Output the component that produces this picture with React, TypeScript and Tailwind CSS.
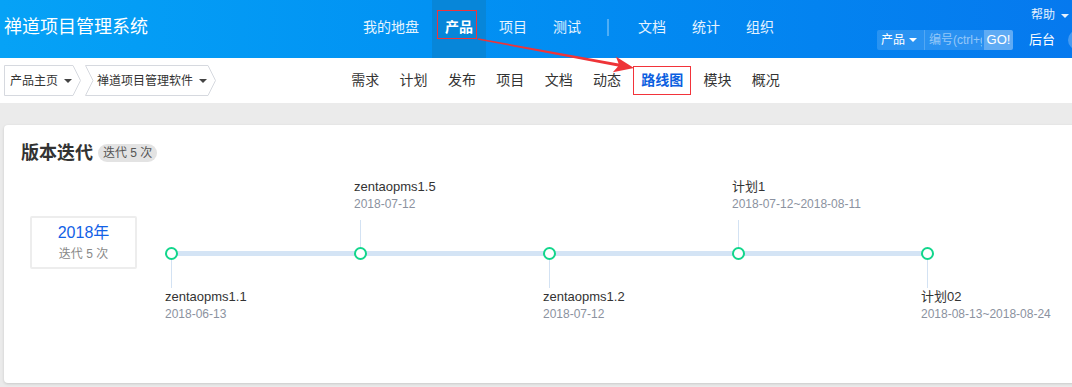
import React from "react";

type Node = { name: string; date: string; up: boolean };

const nodes: Node[] = [
  { name: "zentaopms1.1", date: "2018-06-13", up: false },
  { name: "zentaopms1.5", date: "2018-07-12", up: true },
  { name: "zentaopms1.2", date: "2018-07-12", up: false },
  { name: "计划1", date: "2018-07-12~2018-08-11", up: true },
  { name: "计划02", date: "2018-08-13~2018-08-24", up: false },
];

const mainNav = ["我的地盘", "产品", "项目", "测试", "|", "文档", "统计", "组织"];
const subNav = ["需求", "计划", "发布", "项目", "文档", "动态", "路线图", "模块", "概况"];

function Caret({ className = "" }: { className?: string }) {
  return (
    <span
      className={`inline-block h-0 w-0 border-x-[4px] border-t-[4px] border-x-transparent border-t-current ${className}`}
    />
  );
}

function Crumb({ label, width, first }: { label: string; width: number; first?: boolean }) {
  const h = 31;
  const pts = first
    ? `0.5,0.5 ${width - 8},0.5 ${width - 0.5},${h / 2} ${width - 8},${h - 0.5} 0.5,${h - 0.5}`
    : `0.5,0.5 ${width - 8},0.5 ${width - 0.5},${h / 2} ${width - 8},${h - 0.5} 0.5,${h - 0.5} 8,${h / 2}`;
  return (
    <div className="relative flex h-[31px] items-center" style={{ width }}>
      <svg className="absolute inset-0" width={width} height={h}>
        <polygon points={pts} fill="white" stroke="#d6d9df" strokeWidth="1" />
      </svg>
      <span className={`relative flex items-center text-[12px] text-[#333] ${first ? "pl-[6px]" : "pl-[12px]"}`}>
        {label}
        <Caret className="ml-[6px] text-[#444]" />
      </span>
    </div>
  );
}

function TimelineNode({ n, last }: { n: Node; last?: boolean }) {
  const label = (
    <div className="whitespace-nowrap">
      <div className="text-[13px] leading-[18px] text-[#333]">{n.name}</div>
      <div className="text-[12px] leading-[17px] text-[#8b92a0]">{n.date}</div>
    </div>
  );
  return (
    <div className={`flex flex-col ${last ? "w-[120px]" : "w-[189px]"}`}>
      <div className="flex h-[69px] flex-col justify-end">
        {n.up && (
          <>
            {label}
            <div className="mt-[7px] ml-[6px] h-[27px] w-px bg-[#d3e2f3]" />
          </>
        )}
      </div>
      <div className="relative z-10 h-[13px] w-[13px] rounded-full border-2 border-[#12d68c] bg-white" />
      {!n.up && (
        <div>
          <div className="ml-[6px] h-[28px] w-px bg-[#d3e2f3]" />
          {label}
        </div>
      )}
    </div>
  );
}

export default function App() {
  return (
    <div className="relative h-[387px] w-[1072px] overflow-hidden bg-[#ebebeb] font-['Liberation_Sans','Noto_Sans_CJK_SC',sans-serif]">
      {/* header */}
      <header className="flex h-[58px] bg-linear-to-r from-[#06a2f6] to-[#0679ee] text-white">
        <div className="w-[350px] pl-[4px] pt-[15px] text-[18px] leading-[24px]">禅道项目管理系统</div>
        <nav className="flex h-full items-stretch text-[14px]">
          {mainNav.map((m, i) =>
            m === "|" ? (
              <span key={i} className="mt-[19px] mr-[16px] ml-[13px] h-[17px] w-[2px] bg-white/30" />
            ) : (
              <a
                key={i}
                className={`relative flex items-center px-[13px] pb-[4px] ${
                  m === "产品" ? "bg-[#0786d9] font-bold text-white" : "text-white/90"
                }`}
              >
                {m}
                {m === "产品" && (
                  <span className="absolute top-[10px] left-[5px] h-[29px] w-[40px] border border-[#f2333a]" />
                )}
              </a>
            )
          )}
        </nav>
        <div className="mr-[-16px] ml-auto flex flex-col items-end">
          <div className="mt-[7px] mr-[19px] flex items-center text-[12px] leading-[17px] text-white/90">
            帮助
            <Caret className="ml-[6px]" />
          </div>
          <div className="mt-[6px] flex items-center">
            <div className="flex h-[20px] w-[136px] items-stretch overflow-hidden rounded-[2px] bg-white/15 text-[12px]">
              <span className="flex items-center pl-[4px] pr-[7px] text-white">
                产品
                <Caret className="ml-[4px]" />
              </span>
              <span className="w-px bg-white/20" />
              <span className="w-[57px] overflow-hidden whitespace-nowrap pl-[4px] leading-[20px] text-white/50">
                编号(ctrl+g
              </span>
              <span className="ml-auto flex w-[29px] items-center justify-center bg-white/25 text-[13px] text-white">
                GO!
              </span>
            </div>
            <span className="ml-[16px] text-[13px] text-white">后台</span>
            <span className="ml-[13px] h-[20px] w-[20px] rounded-full bg-white/25" />
          </div>
        </div>
      </header>

      {/* sub nav */}
      <div className="flex h-[45px] items-center bg-white">
        <div className="ml-[4px] flex items-center gap-[4px]">
          <Crumb label="产品主页" width={77} first />
          <Crumb label="禅道项目管理软件" width={131} />
        </div>
        <nav className="ml-[125px] flex items-center text-[14px] text-[#333]">
          {subNav.map((s) =>
            s === "路线图" ? (
              <a
                key={s}
                className="mx-[2px] flex h-[29px] items-center border border-[#f2333a] px-[7px] font-bold text-[#0c5fe0]"
              >
                {s}
              </a>
            ) : (
              <a key={s} className="px-[10.2px]">
                {s}
              </a>
            )
          )}
        </nav>
      </div>

      {/* body */}
      <div className="pt-[22px] pl-[4px]">
        <div className="mr-[-10px] h-[258px] rounded-[4px] bg-white pt-[16px] pl-[17px] shadow-[0_1px_3px_rgba(0,0,0,0.15)]">
          <div className="flex items-center">
            <h2 className="text-[18px] leading-[24px] font-bold text-[#333]">版本迭代</h2>
            <span className="ml-[5px] rounded-full bg-[#e3e3e3] px-[5px] text-[12px] leading-[18px] text-[#555]">
              迭代 5 次
            </span>
          </div>
          <div className="mt-[13px] flex">
            <div className="mt-[38px] ml-[9px] flex h-[53px] w-[107px] flex-col items-center justify-center rounded-[2px] border-2 border-[#ededed]">
              <div className="text-[16px] leading-[20px] text-[#1261e6]">2018年</div>
              <div className="mt-[3px] text-[12px] leading-[16px] text-[#888]">迭代 5 次</div>
            </div>
            <div className="relative ml-[28px] flex">
              <div className="absolute top-[73px] left-[6px] h-[5px] w-[757px] bg-[#d4e4f5]" />
              {nodes.map((n, i) => (
                <TimelineNode key={i} n={n} last={i === nodes.length - 1} />
              ))}
            </div>
          </div>
        </div>
      </div>

      {/* annotation arrow */}
      <svg className="pointer-events-none absolute top-0 left-0" width="1072" height="387">
        <polygon
          points="478.1,38.3 618.6,63.6 615.8,56.4 634,68 612.8,72.2 618,66.6 477.9,39.7"
          fill="#ee3438"
        />
      </svg>
    </div>
  );
}
